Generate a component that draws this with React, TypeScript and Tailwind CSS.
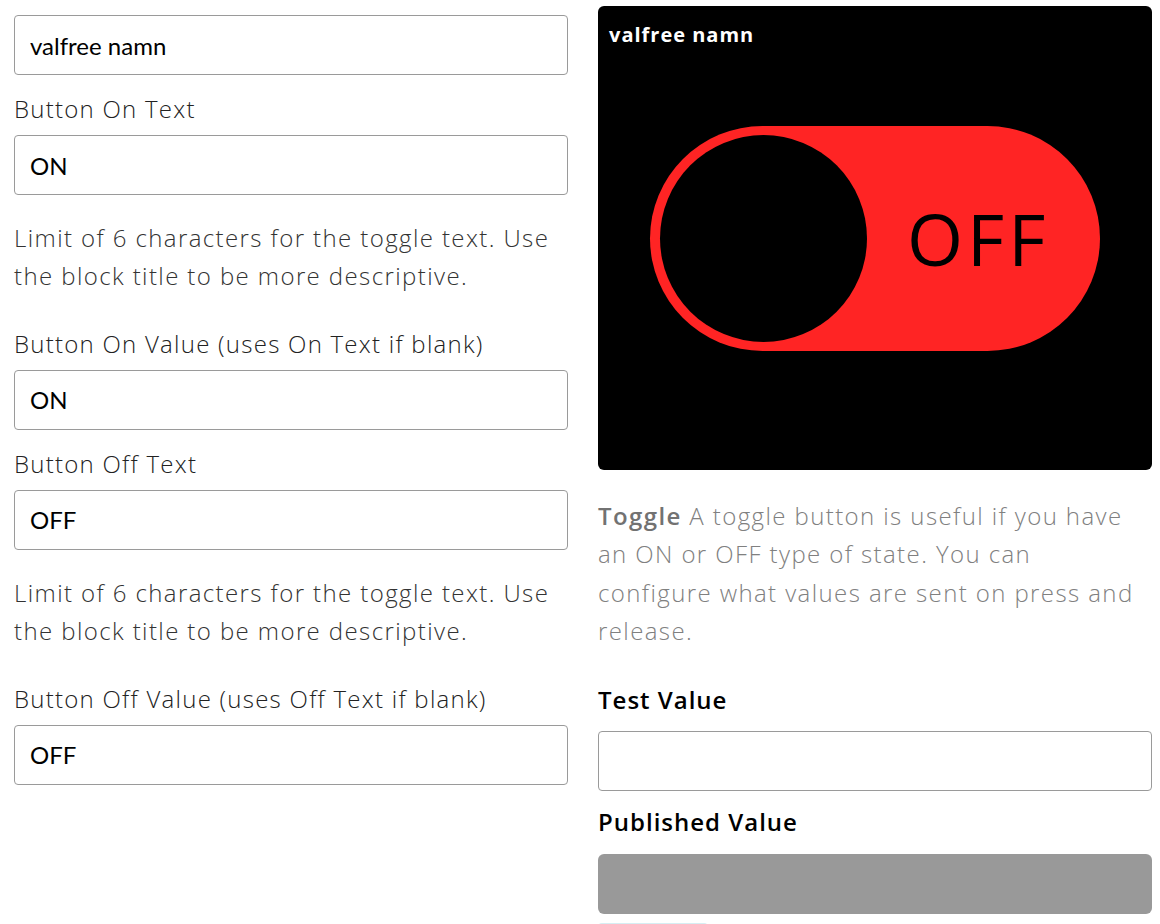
import React from "react";

const font = { fontFamily: "'Open Sans', Lato, sans-serif" };

function Field({ label, value }: { label?: string; value: string }) {
    return (
        <div className="flex shrink-0 flex-col">
            {label && (
                <label className="mt-[16px] mb-[8px] text-[24px] leading-[36px] font-light tracking-[1.25px] text-[#222]">{label}</label>
            )}
            <input
                readOnly
                value={value}
                className="h-[60px] w-full shrink-0 rounded-[4px] border border-[#9a9a9a] bg-white px-[15px] font-[Lato,sans-serif] text-[24px] text-black outline-none"
            />
        </div>
    );
}

function Help({ children }: { children: React.ReactNode }) {
    return <p className="mt-[24px] mb-[14px] shrink-0 text-[24px] leading-[38.4px] font-light tracking-[1.4px] text-[#333]">{children}</p>;
}

export default function App() {
    return (
        <div className="flex h-[924px] gap-[30px] overflow-hidden bg-white pl-[14px]" style={font}>
            <section className="flex w-[554px] shrink-0 flex-col pt-[15px]">
                <Field value="valfree namn" />
                <Field label="Button On Text" value="ON" />
                <Help>Limit of 6 characters for the toggle text. Use the block title to be more descriptive.</Help>
                <Field label="Button On Value (uses On Text if blank)" value="ON" />
                <Field label="Button Off Text" value="OFF" />
                <Help>Limit of 6 characters for the toggle text. Use the block title to be more descriptive.</Help>
                <Field label="Button Off Value (uses Off Text if blank)" value="OFF" />
            </section>

            <section className="flex w-[554px] shrink-0 flex-col pt-[6px]">
                <div className="relative flex h-[464px] shrink-0 items-center justify-center rounded-[6px] bg-black">
                    <span className="absolute left-[11px] top-[19px] text-[20px] font-bold leading-none tracking-[1px] text-white">valfree namn</span>
                    <div className="flex h-[225px] w-[450px] items-center rounded-full bg-[#ff2424] pl-[10px]">
                        <div className="h-[207px] w-[207px] rounded-full bg-black" />
                        <span className="ml-[40px] text-[72px] leading-none tracking-[4px] text-black">OFF</span>
                    </div>
                </div>

                <p className="mt-[27px] shrink-0 text-[24px] leading-[38.4px] font-light tracking-[1.4px] text-[#808080]">
                    <span className="font-semibold text-[#727272]">Toggle</span> A toggle button is useful if you have an ON or OFF type of state. You can configure what values are sent on press and release.
                </p>

                <h3 className="mt-[31px] mb-[13px] shrink-0 text-[24px] leading-[36px] font-semibold tracking-[1px] text-black">Test Value</h3>
                <input readOnly className="h-[60px] w-full shrink-0 rounded-[4px] border border-[#9a9a9a] bg-white outline-none" />

                <h3 className="mt-[13px] mb-[14px] shrink-0 text-[24px] leading-[36px] font-semibold tracking-[1px] text-black">Published Value</h3>
                <div className="h-[60px] w-full shrink-0 rounded-[6px] bg-[#999999]" />

                <button className="mt-[9px] h-[40px] w-[110px] shrink-0 rounded-[4px] bg-[#d6eef3]" />
            </section>
        </div>
    );
}
